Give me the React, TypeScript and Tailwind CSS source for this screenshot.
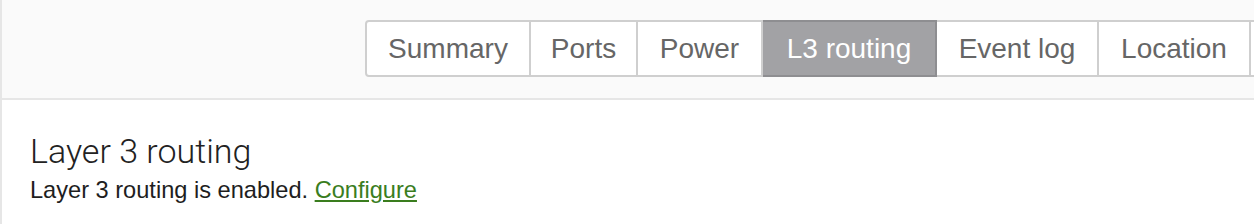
const tabs = [
  { label: 'Summary', width: 'w-[166px]' },
  { label: 'Ports', width: 'w-[107px]' },
  { label: 'Power', width: 'w-[125px]' },
  { label: 'L3 routing', width: 'w-[174px]' },
  { label: 'Event log', width: 'w-[162px]' },
  { label: 'Location', width: 'w-[152px]' },
];

export default function App() {
  const active = 'L3 routing';

  return (
    <div className="w-[1254px] h-[224px] overflow-hidden bg-white border-l-2 border-[#e6e6e6] font-['Liberation_Sans',Arial,sans-serif]">
      {/* Header with tabs */}
      <div className="h-[100px] bg-[#fafafa] border-b-2 border-[#e6e6e6] pt-[20px] pl-[363px] overflow-hidden">
        <div className="flex w-max">
          {tabs.map((tab, i) => {
            const isActive = tab.label === active;
            return (
              <div
                key={tab.label}
                className={`${tab.width} h-[57px] flex items-center justify-center text-[28px] border-y-2 border-r-2 ${
                  i === 0 ? 'border-l-2 rounded-l-[4px]' : ''
                } ${
                  isActive
                    ? 'bg-[#a2a2a5] border-[#8e8e91] text-white'
                    : 'bg-white border-[#cfcfcf] text-[#666666]'
                }`}
              >
                {tab.label}
              </div>
            );
          })}
          {/* next tab, clipped by the window edge */}
          <div className="h-[57px] w-[40px] bg-white border-y-2 border-[#cfcfcf]" />
        </div>
      </div>

      {/* Content */}
      <div className="pl-[28px] pt-[31px]">
        <h2 className="text-[34px] leading-[40px] text-[#222222] font-light font-['Roboto',sans-serif]">
          Layer 3 routing
        </h2>
        <p className="mt-[5px] text-[23.6px] leading-[28px] text-[#1e1e1e]">
          Layer 3 routing is enabled.{' '}
          <a href="#" className="text-[#3a7d1e] underline">
            Configure
          </a>
        </p>
      </div>
    </div>
  );
}
